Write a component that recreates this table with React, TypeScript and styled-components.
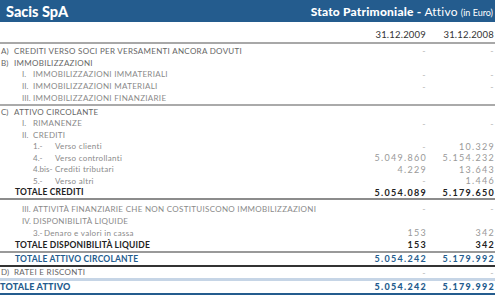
import React from "react";
import styled, { createGlobalStyle, css } from "styled-components";

const Global = createGlobalStyle`
  html, body { margin: 0; padding: 0; background: #fff; }
  body { font-family: Lato, "Liberation Sans", sans-serif; }
`;

const BLUE = "#245c8e";

const Page = styled.div`
  width: 495px;
  height: 296px;
  overflow: hidden;
  display: flex;
  flex-direction: column;
`;

const Header = styled.header`
  height: 22px;
  flex: none;
  background: ${BLUE};
  color: #fff;
  display: flex;
  align-items: center;
  justify-content: space-between;
  padding: 0 2px 0 6px;
`;

const Brand = styled.h1`
  margin: 0;
  font-size: 14.5px;
  font-weight: 900;
`;

const Title = styled.div`
  font-size: 12px;
  font-weight: 900;
  letter-spacing: 0.2px;
  white-space: nowrap;
  span { font-weight: 400; }
  small { font-size: 9px; font-weight: 400; letter-spacing: 0; }
`;

const Grid = styled.div`
  display: grid;
  grid-template-columns: 1fr 69px 68px;
  padding-right: 1px;
  align-items: center;
`;

const DatesRow = styled(Grid)`
  height: 20px;
  align-items: end;
  padding-bottom: 2px;
  box-sizing: border-box;
`;

const DateCell = styled.div`
  text-align: right;
  font-size: 9.5px;
  color: #333;
  letter-spacing: 0.2px;
`;

type Kind = "section" | "item" | "sub" | "total" | "blueTotal" | "grand";

const Row = styled(Grid)<{ $kind: Kind; $h: number }>`
  height: ${(p) => p.$h}px;
  font-size: 8px;
  letter-spacing: 0.3px;
  color: #8a8a8a;
  ${(p) => p.$kind === "section" && css`color: #666;`}
  ${(p) => p.$kind === "total" && css`color: #222; font-weight: 700; font-size: 8.5px; letter-spacing: 0.2px;`}
  ${(p) => p.$kind === "blueTotal" && css`color: ${BLUE}; font-weight: 700; font-size: 8.5px; letter-spacing: 0.2px;`}
  ${(p) => p.$kind === "grand" && css`color: ${BLUE}; font-weight: 900; font-size: 9px; letter-spacing: 0.2px;`}
`;

const Label = styled.div<{ $indent: number }>`
  display: flex;
  align-items: center;
  padding-left: ${(p) => p.$indent}px;
  white-space: nowrap;
`;

const Marker = styled.span<{ $w: number }>`
  width: ${(p) => p.$w}px;
  flex: none;
  letter-spacing: 0;
`;

const Value = styled.div<{ $kind: Kind }>`
  text-align: right;
  font-size: 9px;
  letter-spacing: 1.3px;
  margin-right: -1px;
  ${(p) => (p.$kind === "section" || p.$kind === "item" || p.$kind === "sub") && css`color: #999;`}
`;

const Dash = styled.span`
  color: #bbb;
`;

const Rule = styled.div<{ $c: string; $h: number; $mb?: number }>`
  height: ${(p) => p.$h}px;
  background: ${(p) => p.$c};
  margin-bottom: ${(p) => p.$mb ?? 0}px;
  flex: none;
`;

type Line = {
  kind: Kind;
  marker?: string;
  text: string;
  a: string;
  b: string;
  tight?: boolean;
};

const rowsA: Line[] = [
  { kind: "section", marker: "A)", text: "CREDITI VERSO SOCI PER VERSAMENTI ANCORA DOVUTI", a: "-", b: "-" },
  { kind: "section", marker: "B)", text: "IMMOBILIZZAZIONI", a: "", b: "" },
  { kind: "item", marker: "I.", text: "IMMOBILIZZAZIONI IMMATERIALI", a: "-", b: "-" },
  { kind: "item", marker: "II.", text: "IMMOBILIZZAZIONI MATERIALI", a: "-", b: "-" },
  { kind: "item", marker: "III.", text: "IMMOBILIZZAZIONI FINANZIARIE", a: "", b: "" },
];

const rowsC: Line[] = [
  { kind: "section", marker: "C)", text: "ATTIVO CIRCOLANTE", a: "", b: "" },
  { kind: "item", marker: "I.", text: "RIMANENZE", a: "-", b: "-" },
  { kind: "item", marker: "II.", text: "CREDITI", a: "", b: "" },
  { kind: "sub", marker: "1.-", text: "Verso clienti", a: "-", b: "10.329" },
  { kind: "sub", marker: "4.-", text: "Verso controllanti", a: "5.049.860", b: "5.154.232" },
  { kind: "sub", marker: "4.bis-", text: "Crediti tributari", a: "4.229", b: "13.643" },
  { kind: "sub", marker: "5.-", text: "Verso altri", a: "-", b: "1.446" },
  { kind: "total", text: "TOTALE CREDITI", a: "5.054.089", b: "5.179.650" },
];

const rowsLiq: Line[] = [
  { kind: "item", marker: "III.", text: "ATTIVITÀ FINANZIARIE CHE NON COSTITUISCONO IMMOBILIZZAZIONI", a: "-", b: "-" },
  { kind: "item", marker: "IV.", text: "DISPONIBILITÀ LIQUIDE", a: "", b: "" },
  { kind: "sub", marker: "3.-", text: "Denaro e valori in cassa", a: "153", b: "342", tight: true },
  { kind: "total", text: "TOTALE DISPONIBILITÀ LIQUIDE", a: "153", b: "342" },
];

const indentOf = (l: Line) => {
  switch (l.kind) {
    case "section":
      return 1;
    case "item":
      return 22;
    case "sub":
      return 33;
    case "grand":
      return 0;
    default:
      return 15;
  }
};

const markerW = (l: Line) => {
  if (l.kind === "section") return 13;
  if (l.kind === "item") return 11;
  if (l.kind === "sub") return l.tight ? 11 : 22;
  return 0;
};

const Cell = ({ v, kind }: { v: string; kind: Kind }) => (
  <Value $kind={kind}>{v === "-" ? <Dash>-</Dash> : v}</Value>
);

const TableRow = ({ l, h }: { l: Line; h: number }) => (
  <Row $kind={l.kind} $h={h}>
    <Label $indent={indentOf(l)}>
      {l.marker && <Marker $w={markerW(l)}>{l.marker}</Marker>}
      <span>{l.text}</span>
    </Label>
    <Cell v={l.a} kind={l.kind} />
    <Cell v={l.b} kind={l.kind} />
  </Row>
);

export default function App() {
  return (
    <>
      <Global />
      <Page>
        <Header>
          <Brand>Sacis SpA</Brand>
          <Title>
            Stato Patrimoniale - <span>Attivo</span> <small>(in Euro)</small>
          </Title>
        </Header>
        <DatesRow>
          <div />
          <DateCell>31.12.2009</DateCell>
          <DateCell>31.12.2008</DateCell>
        </DatesRow>
        <Rule $c="#a8a8a8" $h={2} $mb={1} />
        {rowsA.map((l, i) => (
          <TableRow key={"a" + i} l={l} h={11.8} />
        ))}
        <Rule $c="#aaa" $h={2} />
        {rowsC.map((l, i) => (
          <TableRow key={"c" + i} l={l} h={11.5} />
        ))}
        <Rule $c="#8c8c8c" $h={2} $mb={3} />
        {rowsLiq.map((l, i) => (
          <TableRow key={"l" + i} l={l} h={12} />
        ))}
        <Rule $c="#999" $h={2} />
        <TableRow h={12} l={{ kind: "blueTotal", text: "TOTALE ATTIVO CIRCOLANTE", a: "5.054.242", b: "5.179.992" }} />
        <Rule $c="#333" $h={2} />
        <TableRow h={11} l={{ kind: "section", marker: "D)", text: "RATEI E RISCONTI", a: "-", b: "-" }} />
        <Rule $c="#c6d5e6" $h={3} />
        <TableRow h={12} l={{ kind: "grand", text: "TOTALE ATTIVO", a: "5.054.242", b: "5.179.992" }} />
        <Rule $c={BLUE} $h={2} />
      </Page>
    </>
  );
}
